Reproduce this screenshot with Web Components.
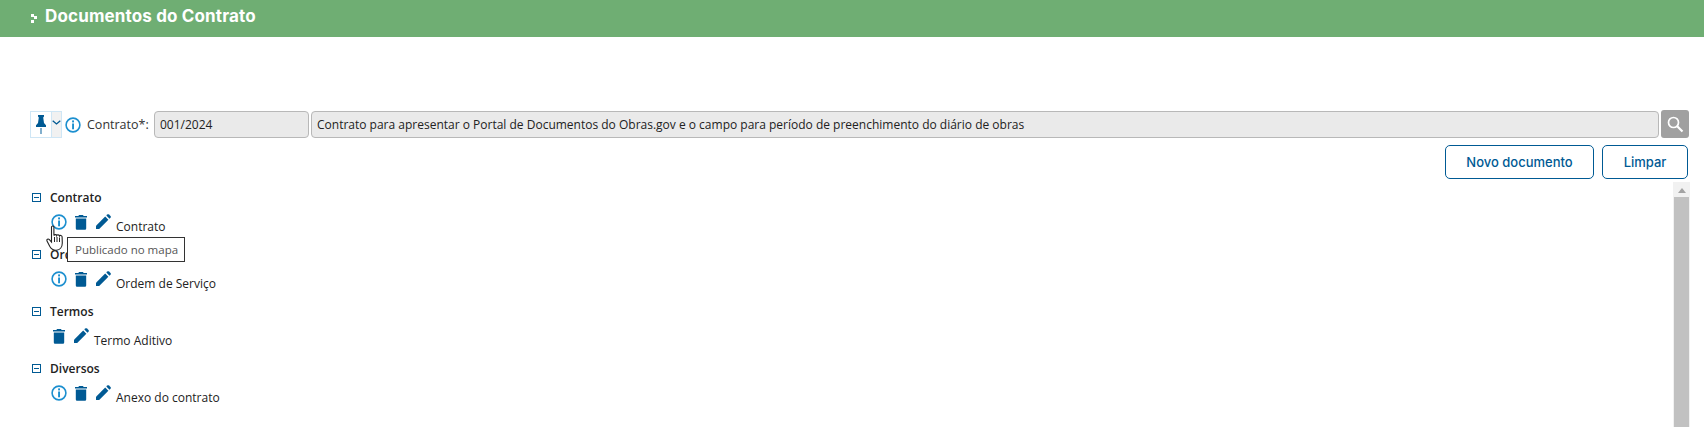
<!DOCTYPE html>
<html lang="pt-BR">
<head>
<meta charset="utf-8">
<title>Documentos do Contrato</title>
<style>
html, body { margin: 0; height: 100%; overflow: hidden; background: #fff; }
body { font-family: "Open Sans", sans-serif; font-size: 12px; color: #222; }
</style>
</head>
<body>
<doc-page></doc-page>
<script>
const ICONS = {
    info: `<svg width="16" height="16" viewBox="0 0 16 16"><circle cx="8" cy="8" r="6.9" fill="none" stroke="#1c8fcf" stroke-width="1.6"/><rect x="7.1" y="3.4" width="1.9" height="2" fill="#1c8fcf"/><rect x="7.1" y="6.5" width="1.9" height="5.8" fill="#1c8fcf"/></svg>`,
    trash: `<svg width="12" height="15" viewBox="0 0 12 15"><path d="M4 0h4l.6 1H12v1.6H0V1h3.4z" fill="#005a94"/><path d="M.8 3.6h10.4v9.6c0 1-.7 1.6-1.6 1.6H2.4c-.9 0-1.6-.6-1.6-1.6z" fill="#005a94"/></svg>`,
    pencil: `<svg width="15" height="15" viewBox="0 0 15 15"><path d="M0 15v-3.2L9.2 2.6l3.2 3.2L3.200 15z" fill="#005a94"/><path d="M10.300 1.500l1-1c.5-.5 1.200-.5 1.700 0l1.500 1.500c.5.5.5 1.200 0 1.700l-1 1z" fill="#005a94"/></svg>`,
    minus: `<svg width="9" height="9" viewBox="0 0 9 9"><rect x=".5" y=".5" width="8" height="8" fill="none" stroke="#005a94"/><rect x="2" y="4" width="5" height="1" fill="#005a94"/></svg>`,
    pin: `<svg width="10" height="19" viewBox="0 0 10 19"><path d="M2 0h6v1.500L7.200 2.500 8 8l2 2.200V12H0v-1.800L2 8l.8-5.500L2 1.500z" fill="#005a94"/><rect x="4.300" y="13" width="1.400" height="6" fill="#4d8db8"/></svg>`,
    chevron: `<svg width="9" height="5" viewBox="0 0 9 5"><path d="M.7.7l3.800 3.300L8.300.7" fill="none" stroke="#005a94" stroke-width="1.300"/></svg>`,
    search: `<svg width="17" height="17" viewBox="0 0 17 17"><circle cx="6.500" cy="6.500" r="5" fill="none" stroke="#fff" stroke-width="1.700"/><path d="M10.200 10.200l5.300 5.300" stroke="#fff" stroke-width="2.200"/></svg>`,
    hand: `<svg width="23" height="27" viewBox="0 0 20 27"><path d="M5 2c0-1.400 2.400-1.400 2.400 0v8.500c.3-1.200 2.600-1.200 2.800 0 .4-1 2.600-.9 2.800.4.500-.8 2.500-.6 2.600 1l.2 6c0 3.800-2.200 7-6 7.300-3.200.2-5-1.200-6.600-4L.5 16c-.8-1.500 1.100-2.700 2.400-1.300L5 17z" fill="#fff" stroke="#222" stroke-width="1.100"/><path d="M8 12v5M10.500 12v5M13 12.500V17" stroke="#222" stroke-width="1" fill="none"/></svg>`
};

class DocHeader extends HTMLElement {
    constructor() {
        super();
        this.attachShadow({ mode: 'open' });
        this.shadowRoot.innerHTML = `
        <style>
            :host {
                display: flex;
                align-items: center;
                height: 37px;
                padding: 0 0 5px 31px;
                box-sizing: border-box;
                background: #6fae73;
                color: #fff;
                font: 700 17px Inter, "Open Sans", sans-serif;
                letter-spacing: .15px;
            }
            .mark { display: grid; grid-template-columns: 3px 3px; gap: 1px 0; margin-right: 8px; margin-top: 4px; }
            .mark i { width: 3px; height: 3px; background: #fff; }
            .mark i:nth-child(even) { margin-top: 2px; }
        </style>
        <span class="mark"><i></i><i></i><i></i></span>
        <slot></slot>
        `;
    }
}
customElements.define('doc-header', DocHeader);

class ContractBar extends HTMLElement {
    constructor() {
        super();
        this.attachShadow({ mode: 'open' });
        this.shadowRoot.innerHTML = `
        <style>
            :host {
                display: flex;
                align-items: center;
                height: 28px;
                font: 12px "Open Sans", sans-serif;
            }
            .pin {
                display: flex;
                width: 32px;
                height: 27px;
                box-sizing: border-box;
                border: 1px solid #cfe6f5;
            }
            .pin b { width: 20px; display: flex; align-items: center; justify-content: center; border-right: 1px solid #cfe6f5; }
            .pin span { flex: 1; background: #f1f1f1; display: flex; align-items: center; justify-content: center; padding-bottom: 3px; }
            .info { margin: 0 6px 0 3px; height: 16px; padding-top: 2px; }
            label { color: #333; font-size: 12.5px; width: 67px; padding-top: 1px; }
            .field {
                height: 27px;
                box-sizing: border-box;
                border: 1px solid #b8b8b8;
                border-radius: 4px;
                background: #eaeaea;
                color: #222;
                padding: 0 5px;
                display: flex;
                align-items: center;
                white-space: nowrap;
            }
            .num { width: 155px; margin-right: 2px; }
            .desc { width: 1348px; margin-right: 2px; }
            .search {
                width: 28px;
                height: 28px;
                border-radius: 3px;
                background: #a0a0a0;
                display: flex;
                align-items: center;
                justify-content: center;
            }
        </style>
        <div class="pin"><b>${ICONS.pin}</b><span>${ICONS.chevron}</span></div>
        <span class="info">${ICONS.info}</span>
        <label>Contrato*:</label>
        <div class="field num">001/2024</div>
        <div class="field desc">Contrato para apresentar o Portal de Documentos do Obras.gov e o campo para período de preenchimento do diário de obras</div>
        <div class="search">${ICONS.search}</div>
        `;
    }
}
customElements.define('contract-bar', ContractBar);

class OutlineButton extends HTMLElement {
    constructor() {
        super();
        this.attachShadow({ mode: 'open' });
        this.shadowRoot.innerHTML = `
        <style>
            :host {
                display: flex;
                align-items: center;
                justify-content: center;
                height: 34px;
                box-sizing: border-box;
                border: 1px solid #005a94;
                border-radius: 5px;
                background: #fff;
                color: #005a94;
                font: 500 13px Inter, "Open Sans", sans-serif;
            }
        </style>
        <slot></slot>
        `;
    }
}
customElements.define('outline-button', OutlineButton);

class DocGroup extends HTMLElement {
    constructor() {
        super();
        this.attachShadow({ mode: 'open' });
        this.shadowRoot.innerHTML = `
        <style>
            :host { display: block; height: 57px; }
            .head { display: flex; align-items: center; height: 20px; font-weight: 600; font-size: 12px; color: #222; }
            .head span { display: flex; margin-right: 9px; }
        </style>
        <div class="head"><span>${ICONS.minus}</span>${this.getAttribute('title')}</div>
        <slot></slot>
        `;
    }
}
customElements.define('doc-group', DocGroup);

class DocItem extends HTMLElement {
    constructor() {
        super();
        this.attachShadow({ mode: 'open' });
        const info = this.hasAttribute('no-info') ? '' : `<span class="i">${ICONS.info}</span>`;
        this.shadowRoot.innerHTML = `
        <style>
            :host {
                display: flex;
                align-items: flex-start;
                height: 20px;
                margin-top: 7px;
                padding-left: 19px;
                position: relative;
                font-size: 12px;
                color: #222;
            }
            :host([no-info]) { padding-left: 21px; }
            span { display: flex; }
            .i { margin-right: 8px; }
            .t { margin: 1px 9px 0 0; }
            .p { margin-right: 5px; }
            .x { margin-top: 4px; line-height: 17px; }
        </style>
        ${info}<span class="t">${ICONS.trash}</span><span class="p">${ICONS.pencil}</span>
        <div class="x"><slot></slot></div>
        `;
    }
}
customElements.define('doc-item', DocItem);

class DocTooltip extends HTMLElement {
    constructor() {
        super();
        this.attachShadow({ mode: 'open' });
        this.shadowRoot.innerHTML = `
        <style>
            :host {
                position: absolute;
                left: 67px;
                top: 237px;
                width: 118px;
                height: 25px;
                box-sizing: border-box;
                border: 1px solid #333;
                background: #fff;
                color: #555;
                font: 11.5px "Open Sans", sans-serif;
                display: flex;
                align-items: center;
                padding-left: 7px;
                z-index: 2;
            }
        </style>
        <slot></slot>
        `;
    }
}
customElements.define('doc-tooltip', DocTooltip);

class DocPage extends HTMLElement {
    constructor() {
        super();
        this.attachShadow({ mode: 'open' });
        this.shadowRoot.innerHTML = `
        <style>
            :host { display: block; position: relative; height: 427px; overflow: hidden; }
            .main { padding: 73px 15px 0 30px; }
            .actions { display: flex; justify-content: flex-end; gap: 8px; margin: 7px 1px 0 0; }
            .list { display: flex; margin-top: 3px; }
            .tree { flex: 1; padding: 5px 0 0 2px; }
            .scroll { width: 17px; height: 248px; margin-right: -1px; background: #f1f1f1; display: flex; flex-direction: column; align-items: center; }
            .scroll i { width: 0; height: 0; margin: 6px 0 4px; border: 4px solid transparent; border-top: 0; border-bottom: 5px solid #a3a3a3; }
            .scroll b { width: 15px; flex: 1; background: #c1c1c1; }
            .hand { position: absolute; left: 45px; top: 225px; z-index: 3; display: flex; }
        </style>
        <doc-header>Documentos do Contrato</doc-header>
        <div class="main">
            <contract-bar></contract-bar>
            <div class="actions">
                <outline-button style="width:149px">Novo documento</outline-button>
                <outline-button style="width:86px">Limpar</outline-button>
            </div>
            <div class="list">
                <div class="tree">
                    <doc-group title="Contrato"><doc-item>Contrato</doc-item></doc-group>
                    <doc-group title="Ordem de Serviço"><doc-item>Ordem de Serviço</doc-item></doc-group>
                    <doc-group title="Termos"><doc-item no-info>Termo Aditivo</doc-item></doc-group>
                    <doc-group title="Diversos"><doc-item>Anexo do contrato</doc-item></doc-group>
                </div>
                <div class="scroll"><i></i><b></b></div>
            </div>
        </div>
        <doc-tooltip>Publicado no mapa</doc-tooltip>
        <span class="hand">${ICONS.hand}</span>
        `;
    }
}
customElements.define('doc-page', DocPage);
</script>
</body>
</html>
